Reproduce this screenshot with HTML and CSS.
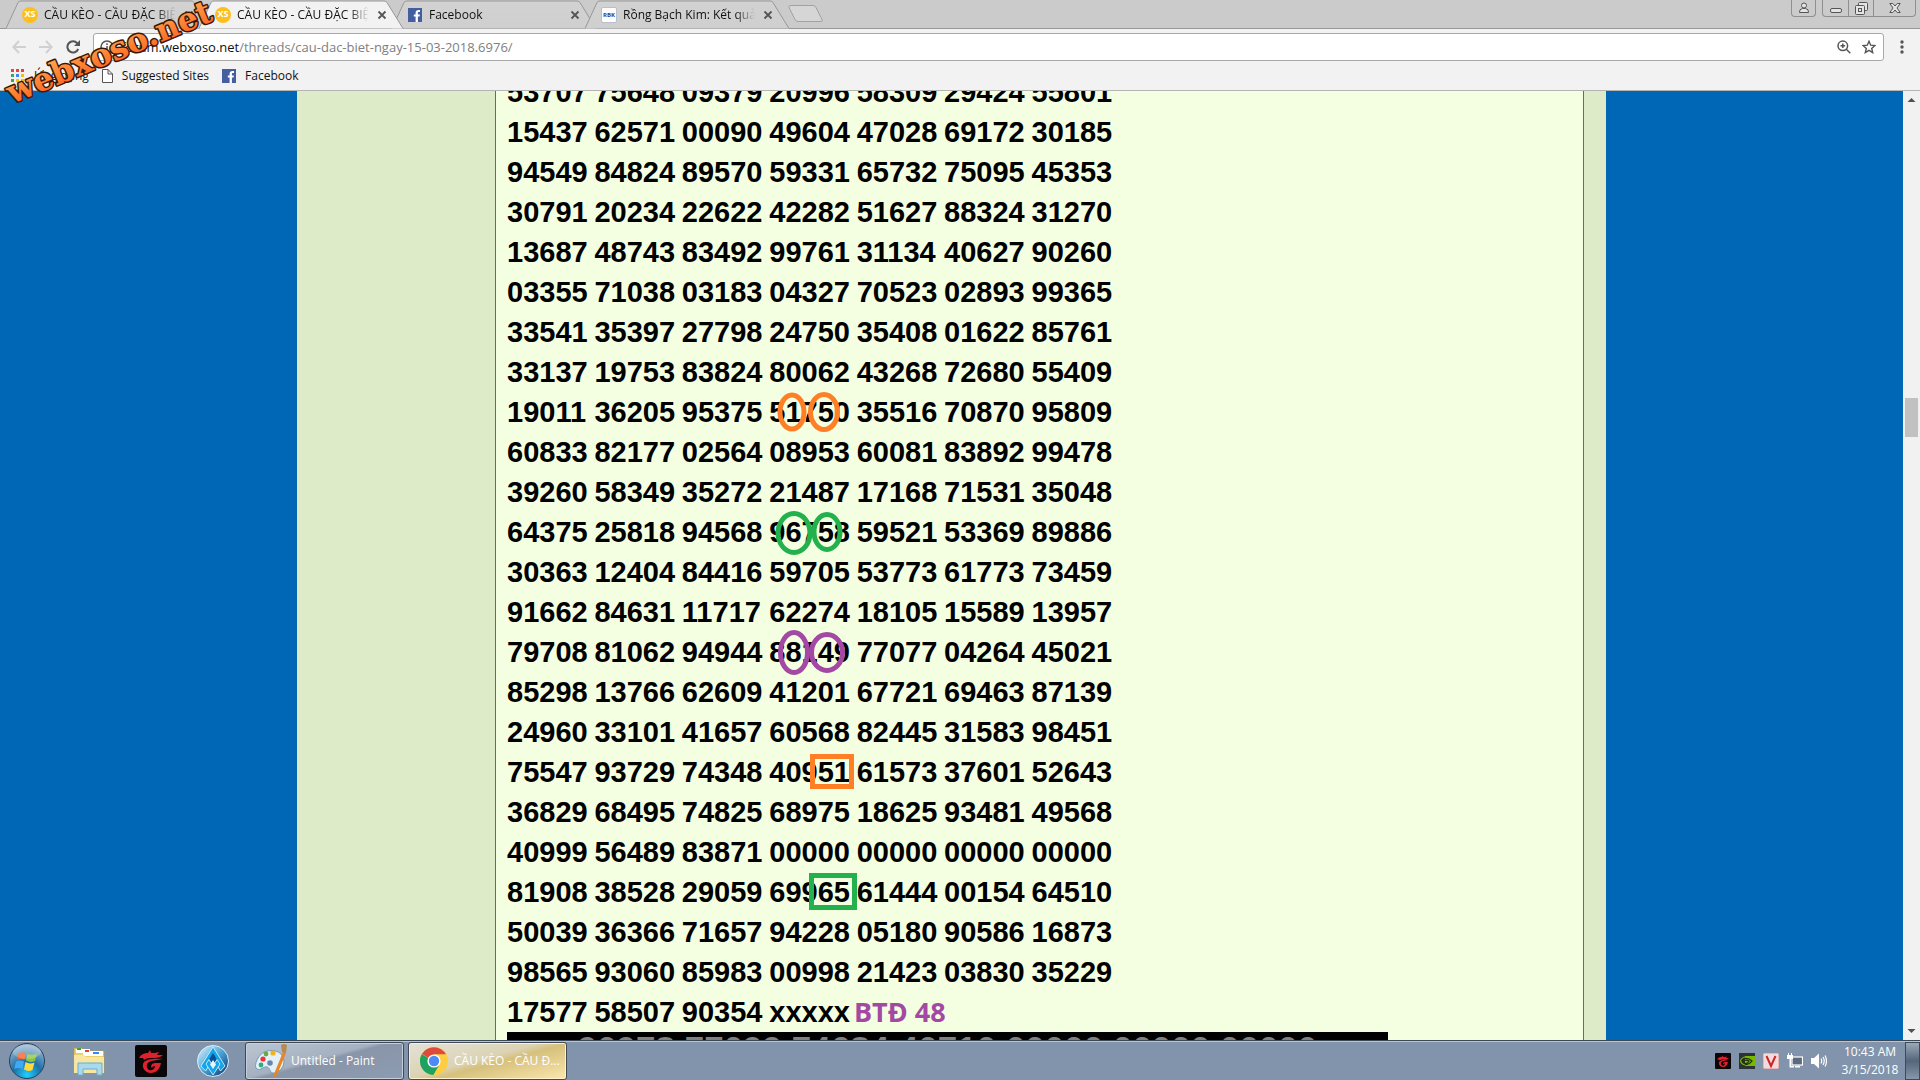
FILE: index.html
```html
<!DOCTYPE html>
<html lang="vi">
<head>
<meta charset="utf-8">
<title>CẦU KÈO - CẦU ĐẶC BIỆT</title>
<link rel="stylesheet" href="styles.css">
</head>
<body>
<svg class="defs" aria-hidden="true">
  <defs>
    <linearGradient id="tabIdle" x1="0" y1="0" x2="0" y2="1"><stop offset="0" stop-color="#d2d2d2"/><stop offset="1" stop-color="#cfcfcf"/></linearGradient>
    <linearGradient id="logoFill" x1="0" y1="0" x2="0" y2="1"><stop offset="0.2" stop-color="#ffa04a"/><stop offset="1" stop-color="#fb5a1c"/></linearGradient>
    <radialGradient id="orb" cx="0.5" cy="0.9" r="0.9"><stop offset="0" stop-color="#1fd0ff"/><stop offset="0.45" stop-color="#1d6fa8"/><stop offset="1" stop-color="#a9c0d4"/></radialGradient>
    <linearGradient id="oval" x1="0" y1="0" x2="1" y2="1"><stop offset="0" stop-color="#e2f6ff"/><stop offset="0.5" stop-color="#4aa3d8"/><stop offset="1" stop-color="#042c66"/></linearGradient>
    <symbol id="tabShape" viewBox="0 0 206 28"><path d="M0 28 12 2Q13 .5 15 .5H185Q187 .5 188 2L204 28" stroke="#979797"/></symbol>
    <symbol id="fb" viewBox="0 0 14 14"><path fill="#435f9f" d="M0 0h14v14H0z"/><path fill="#fff" d="M7.6 14V8.6H5.8V6.4h1.8V4.8C7.600 2.900 8.700 2 10.400 2H12v2h-1c-.9 0-1.100.4-1.100 1.100v1.300h2L11.600 8.600H9.900V14z"/></symbol>
    <symbol id="close" viewBox="0 0 10 10"><path d="M1.500 1.500l7 7M8.500 1.500l-7 7" stroke="#555" stroke-width="1.800"/></symbol>
    <symbol id="garena" viewBox="0 0 32 32"><rect width="32" height="32" rx="2" fill="#0b0708"/><path fill="#e0202c" d="M4 13C6 9 10 8 13 8l2-3 1 3c3 0 5 0 8-1l-2 3h6c-2 2-5 3-9 3-5 0-8 0-10 2l-1-2zM9 17c3-3 11-4 19-3-4 1-10 1-14 3-3 2-3 6 0 8 3 1 6-1 6-4-2 0-3 1-3 2-2-2 0-5 3-5h6c-1 6-5 10-10 10-7 0-10-7-7-11z"/></symbol>
  </defs>
</svg>

<header class="browser">
  <div class="tabstrip">
    <div class="tab"><svg class="shape" fill="url(#tabIdle)"><use href="#tabShape"/></svg><span class="xs">xs</span><span class="name">CẦU KÈO - CẦU ĐẶC BIỆT</span><button class="x" aria-label="Close"><svg><use href="#close"/></svg></button></div>
    <div class="tab active"><svg class="shape" fill="#f2f2f2"><use href="#tabShape"/></svg><span class="xs">xs</span><span class="name">CẦU KÈO - CẦU ĐẶC BIỆT</span><button class="x" aria-label="Close"><svg><use href="#close"/></svg></button></div>
    <div class="tab"><svg class="shape" fill="url(#tabIdle)"><use href="#tabShape"/></svg><svg class="fb"><use href="#fb"/></svg><span class="name">Facebook</span><button class="x" aria-label="Close"><svg><use href="#close"/></svg></button></div>
    <div class="tab"><svg class="shape" fill="url(#tabIdle)"><use href="#tabShape"/></svg><span class="rbk">RBK</span><span class="name">Rồng Bạch Kim: Kết quả xổ</span><button class="x" aria-label="Close"><svg><use href="#close"/></svg></button></div>
    <button class="newtab" aria-label="New tab"><svg width="36" height="18" viewBox="0 0 36 18"><path d="M3 .5h22q2 0 3 2l6 12q1 2-1 2H10q-2 0-3-2L1 2.500Q.5.5 3 .5z" fill="#d6d6d6" stroke="#a2a2a2"/></svg></button>
    <div class="winctl">
      <button class="profile" aria-label="Profile"><svg width="12" height="12" viewBox="0 0 12 12"><circle cx="6" cy="3.500" r="2.500"/><path d="M1.500 10.500Q1 7 4.500 6.500h3Q11 7 10.500 10.500z"/></svg></button>
      <div class="wingroup">
        <button aria-label="Minimize"><svg width="12" height="12" viewBox="0 0 12 12"><rect x=".5" y="6.500" width="11" height="4" rx="1.500"/></svg></button>
        <button aria-label="Restore"><svg width="14" height="14" viewBox="0 0 14 14"><rect x="4.500" y="1.500" width="9" height="8" rx="1"/><rect x="1.500" y="4.500" width="9" height="9" rx="1"/><rect x="4.500" y="7.500" width="3" height="3"/></svg></button>
        <button class="wide" aria-label="Close window"><svg width="12" height="12" viewBox="0 0 12 12"><path d="M.8 1.500h3L6 4l2.200-2.500h3L8 6l3.200 4.500h-3L6 8l-2.200 2.500h-3L4 6z"/></svg></button>
      </div>
    </div>
  </div>

  <div class="toolbar">
    <button aria-label="Back"><svg width="14" height="14" viewBox="0 0 14 14" stroke="#d0d0d0"><path d="M14 7H1.500M7 1 1.300 7 7 13"/></svg></button>
    <button aria-label="Forward"><svg width="14" height="14" viewBox="0 0 14 14" stroke="#d0d0d0"><path d="M0 7h12.500M7 1l5.700 6L7 13"/></svg></button>
    <button aria-label="Reload"><svg width="14" height="14" viewBox="0 0 14 14" stroke="#555"><path d="M12.200 9A5.600 5.600 0 1 1 11.300 3.300"/><path d="M14 0v6H8z" fill="#555" stroke="none"/></svg></button>
    <div class="omnibox">
      <svg width="14" height="14" viewBox="0 0 14 14" fill="none" stroke="#555" stroke-width="1.500"><circle cx="7" cy="7" r="6"/><path d="M7 6v4.500M7 3.300V5"/></svg>
      <div class="url"><b>forum.webxoso.net</b>/threads/cau-dac-biet-ngay-15-03-2018.6976/</div>
      <svg width="14" height="14" viewBox="0 0 14 14" fill="none" stroke="#555" stroke-width="1.500"><circle cx="5.800" cy="5.800" r="4.800"/><path d="M9.300 9.300l4 4M3.500 5.800h4.600M5.800 3.500v4.600"/></svg>
      <svg width="14" height="14" viewBox="0 0 14 14" fill="none" stroke="#555" stroke-width="1.400"><path d="M7 1.300l1.700 3.900 4.200.4-3.200 2.800 1 4.200L7 10.400l-3.700 2.200 1-4.200L1.100 5.600l4.200-.4z"/></svg>
    </div>
    <button class="menu" aria-label="Menu"><svg width="4" height="14" viewBox="0 0 4 14"><circle cx="2" cy="2" r="1.700"/><circle cx="2" cy="7" r="1.700"/><circle cx="2" cy="12" r="1.700"/></svg></button>
  </div>

  <nav class="bookmarks">
    <a href="#"><svg width="14" height="14" viewBox="0 0 14 14"><path fill="#ea4335" d="M0 0h3v3H0zM5 0h3v3H5zM10 0h3v3h-3z"/><path fill="#34a853" d="M0 5h3v3H0zM0 10h3v3H0z"/><path fill="#4285f4" d="M5 5h3v3H5z"/><path fill="#fbbc05" d="M10 5h3v3h-3zM5 10h3v3H5zM10 10h3v3h-3z"/></svg>Ứng dụng</a>
    <a href="#"><svg width="11" height="14" viewBox="0 0 11 14" fill="#fff" stroke="#555"><path d="M.5.5H6L10.500 5v8.500H.5zM6 .5V5h4.500"/></svg>Suggested Sites</a>
    <a href="#"><svg width="14" height="14"><use href="#fb"/></svg>Facebook</a>
  </nav>

  <svg class="watermark" width="230" height="120" viewBox="0 0 230 120" role="img" aria-label="webxoso.net">
    <text x="12" y="104" transform="rotate(-22.500 12 104)">webxoso.net</text>
  </svg>
</header>

<div class="viewport">
  <div class="page">
    <div class="wrap">
      <aside class="userinfo"></aside>
      <main class="post">
        <table class="numbers">
          <tbody>
          <tr><td>53707</td><td>75648</td><td>09379</td><td>20996</td><td>58309</td><td>29424</td><td>55801</td></tr>
          <tr><td>15437</td><td>62571</td><td>00090</td><td>49604</td><td>47028</td><td>69172</td><td>30185</td></tr>
          <tr><td>94549</td><td>84824</td><td>89570</td><td>59331</td><td>65732</td><td>75095</td><td>45353</td></tr>
          <tr><td>30791</td><td>20234</td><td>22622</td><td>42282</td><td>51627</td><td>88324</td><td>31270</td></tr>
          <tr><td>13687</td><td>48743</td><td>83492</td><td>99761</td><td>31134</td><td>40627</td><td>90260</td></tr>
          <tr><td>03355</td><td>71038</td><td>03183</td><td>04327</td><td>70523</td><td>02893</td><td>99365</td></tr>
          <tr><td>33541</td><td>35397</td><td>27798</td><td>24750</td><td>35408</td><td>01622</td><td>85761</td></tr>
          <tr><td>33137</td><td>19753</td><td>83824</td><td>80062</td><td>43268</td><td>72680</td><td>55409</td></tr>
          <tr><td>19011</td><td>36205</td><td>95375</td><td>51750</td><td>35516</td><td>70870</td><td>95809</td></tr>
          <tr><td>60833</td><td>82177</td><td>02564</td><td>08953</td><td>60081</td><td>83892</td><td>99478</td></tr>
          <tr><td>39260</td><td>58349</td><td>35272</td><td>21487</td><td>17168</td><td>71531</td><td>35048</td></tr>
          <tr><td>64375</td><td>25818</td><td>94568</td><td>96758</td><td>59521</td><td>53369</td><td>89886</td></tr>
          <tr><td>30363</td><td>12404</td><td>84416</td><td>59705</td><td>53773</td><td>61773</td><td>73459</td></tr>
          <tr><td>91662</td><td>84631</td><td>11717</td><td>62274</td><td>18105</td><td>15589</td><td>13957</td></tr>
          <tr><td>79708</td><td>81062</td><td>94944</td><td>88149</td><td>77077</td><td>04264</td><td>45021</td></tr>
          <tr><td>85298</td><td>13766</td><td>62609</td><td>41201</td><td>67721</td><td>69463</td><td>87139</td></tr>
          <tr><td>24960</td><td>33101</td><td>41657</td><td>60568</td><td>82445</td><td>31583</td><td>98451</td></tr>
          <tr><td>75547</td><td>93729</td><td>74348</td><td>40951</td><td>61573</td><td>37601</td><td>52643</td></tr>
          <tr><td>36829</td><td>68495</td><td>74825</td><td>68975</td><td>18625</td><td>93481</td><td>49568</td></tr>
          <tr><td>40999</td><td>56489</td><td>83871</td><td>00000</td><td>00000</td><td>00000</td><td>00000</td></tr>
          <tr><td>81908</td><td>38528</td><td>29059</td><td>69965</td><td>61444</td><td>00154</td><td>64510</td></tr>
          <tr><td>50039</td><td>36366</td><td>71657</td><td>94228</td><td>05180</td><td>90586</td><td>16873</td></tr>
          <tr><td>98565</td><td>93060</td><td>85983</td><td>00998</td><td>21423</td><td>03830</td><td>35229</td></tr>
          <tr><td>17577</td><td>58507</td><td>90354</td><td colspan="4">xxxxx <span class="note">BTĐ 48</span></td></tr>
          </tbody>
        </table>
        <div class="attachment">90978 77099 74684 40710 00000 00000 00000</div>
        <svg class="marks" fill="none" stroke-width="5">
          <g transform="translate(-496 -91)">
            <g stroke="#ff7f27"><ellipse cx="792" cy="412" rx="12" ry="17"/><ellipse cx="824" cy="412" rx="13.500" ry="17.500"/><rect x="812.500" y="756.500" width="39" height="30"/></g>
            <g stroke="#22b14c"><ellipse cx="794" cy="533" rx="16" ry="19.500"/><ellipse cx="827" cy="532" rx="13" ry="17.500"/><rect x="811.500" y="875.500" width="43" height="32"/></g>
            <g stroke="#a349a4"><ellipse cx="794" cy="652.500" rx="13.500" ry="20"/><ellipse cx="827" cy="652.500" rx="15.500" ry="18"/></g>
          </g>
        </svg>
      </main>
    </div>
  </div>
  <div class="scrollbar" aria-hidden="true">
    <svg width="17" height="17" viewBox="0 0 17 17"><path fill="#505050" d="M4.500 11 8.500 7l4 4z"/></svg>
    <div class="track"><div class="before"></div><div class="thumb"></div><div class="after"></div></div>
    <svg width="17" height="17" viewBox="0 0 17 17"><path fill="#505050" d="M4.500 6l4 4 4-4z"/></svg>
  </div>
</div>

<footer class="taskbar">
  <div class="pins">
    <button aria-label="Start"><svg width="38" height="38" viewBox="0 0 38 38"><circle cx="19" cy="19" r="17.500" fill="url(#orb)" stroke="#23415f"/><path fill="#f0602a" d="M10 12q4-3 8-1l-1.500 7q-4-2-8 0z"/><path fill="#8cc63f" d="M19.500 11.500q4 2.500 9.500 0l-2 7.500q-5 2-9-.5z"/><path fill="#3fa9f5" d="M8 19.500q4-2 8 0L14.500 27q-4-2-8.500 0z"/><path fill="#ffd83a" d="M17.500 20q4 2.500 9 .5l-2 7.500q-4.500 2-8.500-.5z"/><ellipse cx="19" cy="10" rx="14" ry="7" fill="#fff" opacity=".22"/></svg></button>
    <button aria-label="Explorer"><svg width="32" height="30" viewBox="0 0 32 30"><path fill="#e9cf6e" stroke="#b99a3b" stroke-width=".6" d="M1 2h8l2 3h20v22H1z"/><path fill="#fff" d="M3 3h14v4H3zM10 5h20v5H10z"/><path fill="#3aa53a" d="M4 2h4v2H4z"/><path fill="#d43" d="M12 4h4v2h-4z"/><path fill="#38f" d="M20 6h6v2h-6z"/><path fill="#f7e6a1" d="M1 9h10l2 2h18v16H1z"/><path fill="#a9d9ee" stroke="#6aaccc" d="M5 17h24v12h-5v-6H10v6H5z"/></svg></button>
    <button aria-label="Garena"><svg width="32" height="32"><use href="#garena"/></svg></button>
    <button aria-label="Launcher"><svg width="32" height="32" viewBox="0 0 32 32"><circle cx="16" cy="16" r="15.500" fill="url(#oval)" stroke="#dcecf5"/><path fill="#12a5ea" stroke="#e6f7ff" stroke-width=".8" d="M16 2 28 21l-4.500 5L16 14 8.500 26 4 21z"/><path fill="#0b4f96" d="M16 8l4 6.500-4 6-4-6z"/><path fill="#12a5ea" stroke="#e6f7ff" stroke-width=".8" d="M12 14.500 16 21l4-6.500 3 4.500-7 11-7-11z"/><path fill="#e6f7ff" d="M16 15l3 4.500-3 4.500-3-4.500z"/></svg></button>
  </div>
  <button class="task"><svg width="32" height="34" viewBox="0 0 32 34"><path fill="#e4f0f8" stroke="#6e9cbd" d="M3 14C7 6 20 4 26 10c6 7 2 17-6 19-6 1-4-5-8-6-4-1-6 4-10 2-3-2-1-7 1-11z"/><circle cx="8" cy="15" r="2.600" fill="#e33"/><circle cx="11" cy="10" r="2.400" fill="#6a4"/><circle cx="18" cy="9" r="2.600" fill="#f6b21b"/><circle cx="6" cy="21" r="2.400" fill="#3a7"/><circle cx="15" cy="19" r="2.800" fill="#68a"/><path fill="#e98525" d="M28 8l3 1-9 22-3 2 0-3z"/><path fill="#b98a4f" d="M26 1q3-2 6 0l-1 8-4-1z"/></svg><span>Untitled - Paint</span></button>
  <button class="task current"><svg width="32" height="32" viewBox="0 0 32 32"><circle cx="16" cy="16" r="14" fill="#ffcd41"/><path fill="#dd4b3e" d="M16 16 3.900 9A14 14 0 0 1 28.100 9.500H16z"/><path fill="#1da261" d="M16 16l5.800 4-6.300 10A14 14 0 0 1 3.700 9.200z"/><path fill="#ffcd41" d="M16 9.500h12.400A14 14 0 0 1 15.500 30L21.800 19z"/><circle cx="16" cy="16" r="6.600" fill="#fff"/><circle cx="16" cy="16" r="5.200" fill="#4c8bf5"/></svg><span>CẦU KÈO - CẦU Đ...</span></button>
  <div class="tray">
    <svg width="16" height="16"><use href="#garena"/></svg>
    <svg width="16" height="16" viewBox="0 0 16 16"><rect width="16" height="16" fill="#2c3236"/><path fill="#76b900" d="M6 3h10v10H6z"/><path fill="none" stroke="#76b900" stroke-width="1.200" d="M6 4Q2 5 1.500 8 3 12 7 12"/><path fill="none" stroke="#20300a" stroke-width="1.200" d="M6 5.500q4-.5 7 2.500-3 4-7 3.500M6 5.500Q4 6 3.500 8q1 3 3.500 2.500Q9 10 10 8 8 6.500 6 7.500"/></svg>
    <svg width="16" height="16" viewBox="0 0 16 16"><rect x=".5" y=".5" width="15" height="15" rx="1" fill="#f6d9d9" stroke="#e9b5b5"/><path fill="none" stroke="#c8262c" stroke-width="2" d="M3.500 3 8 13l4.500-10"/></svg>
    <svg width="16" height="16" viewBox="0 0 16 16"><rect x="5" y="4" width="10.500" height="8" fill="#5b6b7d" stroke="#fff" stroke-width="1.200"/><path fill="#fff" d="M8 13h5v1.500H8zM0 2h6v4H4v7h3v1.500H2.500V6H0z"/><path fill="#fff" d="M1 0h1v2H1zM4 0h1v2H4z"/></svg>
    <svg width="16" height="16" viewBox="0 0 16 16"><path fill="#fff" d="M0 5h3l5-4.500v15L3 11H0z"/><path fill="none" stroke="#fff" stroke-width="1.200" d="M10 5.500q1.500 2.500 0 5M12 4q2.500 4 0 8M14 2.500q3 5.500 0 11"/></svg>
  </div>
  <div class="clock"><time>10:43 AM</time><time>3/15/2018</time></div>
  <button class="showdesk" aria-label="Show desktop"></button>
</footer>
</body>
</html>
```
FILE: styles.css
```css
* { box-sizing: border-box; }
html, body { height: 100%; margin: 0; }
body {
  display: flex;
  flex-direction: column;
  overflow: hidden;
  font: 12px/16px "Open Sans", "Noto Sans", sans-serif;
  color: #111;
}
button { margin: 0; padding: 0; border: 0; background: none; font: inherit; color: inherit; }
svg { display: block; flex: none; }
.defs { position: absolute; width: 0; height: 0; }

/* Browser chrome */
.browser { position: relative; flex: none; background: #f2f2f2; border-bottom: 1px solid #b4b4b4; }
.tabstrip { display: flex; height: 29px; padding-left: 6px; background: #cbcbcb; border-bottom: 1px solid #979797; }
.tab { position: relative; display: flex; align-items: center; width: 206px; height: 29px; margin-right: -13px; padding: 0 18px 0 16px; }
.tab.active { z-index: 1; }
.tab > * { position: relative; }
.tab .shape { position: absolute; left: 0; top: 0; width: 206px; height: 29px; }
.tab .name {
  flex: 1;
  margin-left: 6px;
  overflow: hidden;
  line-height: 20px;
  white-space: nowrap;
  -webkit-mask-image: linear-gradient(90deg, #000 85%, transparent);
  mask-image: linear-gradient(90deg, #000 85%, transparent);
}
.tab .x { margin-left: 8px; }
.tab .x svg { width: 10px; height: 10px; }
.tab .fb { width: 14px; height: 14px; margin-right: 1px; }
.xs { width: 16px; height: 16px; border-radius: 50%; background: #fcc01c; color: #fff; font-size: 9px; line-height: 14px; font-weight: 700; text-align: center; text-transform: uppercase; }
.rbk { width: 16px; height: 16px; border: 1px solid #b9c0cc; border-radius: 2px; background: #fff; color: #33417e; font-size: 6px; line-height: 14px; font-weight: 700; text-align: center; }
.newtab { margin: 0 0 0 10px; }
.winctl { display: flex; gap: 6px; height: 17px; margin-left: auto; padding-right: 4px; }
.winctl svg { fill: #e4e4e4; stroke: #555; }
.winctl button { display: flex; align-items: center; justify-content: center; width: 25px; height: 16px; }
.winctl .profile { border: 1px solid #8f8f8f; border-top: 0; border-radius: 0 0 4px 4px; height: 17px; }
.wingroup { display: flex; border: 1px solid #8f8f8f; border-top: 0; border-radius: 0 0 4px 4px; }
.wingroup button + button { border-left: 1px solid #8f8f8f; }
.winctl .wide { width: 42px; }

.toolbar { display: flex; align-items: center; gap: 13px; height: 36px; padding: 0 7px 0 12px; }
.toolbar button svg { fill: none; stroke-width: 2; }
.omnibox { display: flex; align-items: center; flex: 1; gap: 11px; height: 28px; padding: 0 6px; padding-right: 7px; border: 1px solid #a9a9a9; border-radius: 3px; background: #fff; }
.url { flex: 1; margin-left: -4px; font-size: 13px; line-height: 20px; color: #808080; white-space: nowrap; }
.url b { font-weight: 400; color: #111; }
.menu { display: flex; justify-content: center; width: 22px; margin-left: -6px; }
.toolbar .menu svg { fill: #555; }

.bookmarks { display: flex; align-items: center; gap: 13px; height: 25px; padding: 0 11px 3px; }
.bookmarks a { display: flex; align-items: center; gap: 9px; color: inherit; text-decoration: none; }

.watermark { position: absolute; left: 0; top: 0; z-index: 3; pointer-events: none; }
.watermark text { font: 700 32px "DejaVu Serif", serif; fill: url(#logoFill); stroke: #3a1705; stroke-width: 3px; stroke-linejoin: round; paint-order: stroke; }

/* Page */
.viewport { display: flex; flex: 1; min-height: 0; }
.page { flex: 1; min-width: 0; overflow: hidden; background: #0066b6; }
.wrap { display: flex; max-width: 1309px; height: 100%; margin: 0 auto; padding-right: 22px; background: #ddebc8; }
.userinfo { flex: none; width: 198px; }
.post { position: relative; flex: 1; padding-left: 11px; overflow: hidden; background: #f3ffe0; border: solid #6b6b62; border-width: 0 1px; }
.numbers { width: 612px; margin-top: -19px; table-layout: fixed; border-collapse: collapse; }
.numbers td { height: 40px; padding: 0; font: 700 29px/40px "Liberation Sans", Arial, sans-serif; color: #000; white-space: nowrap; }
.note { margin-left: -4px; font: 700 27px/28px "Open Sans", sans-serif; color: #a349a4; }
.attachment { max-width: 881px; background: #000; color: #808080; font: 700 35px/34px "Liberation Sans", Arial, sans-serif; text-align: center; white-space: nowrap; }
.marks { position: absolute; left: 0; top: 0; width: 100%; height: 100%; pointer-events: none; }

.scrollbar { display: flex; flex-direction: column; flex: none; width: 17px; background: #f1f1f1; }
.track { display: flex; flex-direction: column; flex: 1; padding: 0 2px; }
.thumb { height: 39px; background: #c1c1c1; }
.before { flex: 290; }
.after { flex: 586; }

/* Taskbar */
.taskbar { display: flex; flex: none; align-items: center; height: 40px; background: #8294ab; border-top: 1px solid #3c4856; box-shadow: inset 0 1px #b9c5d3; color: #fff; }
.pins { display: flex; align-items: center; gap: 30px; padding: 0 16px 0 8px; }
.pins button:first-child { margin-right: -3px; }
.task { display: flex; align-items: center; gap: 4px; width: 159px; height: 38px; margin-right: 4px; padding: 0 9px; border: 1px solid #3f4a59; border-radius: 3px; background: linear-gradient(165deg, #bcc6d3 0%, #a5b0c0 45%, #8995a8 50%, #8d9cb3 100%); box-shadow: inset 0 0 0 1px #c5cedb; text-align: left; white-space: nowrap; }
.task.current { background: linear-gradient(165deg, #e4e2d8 0%, #dcd3b4 45%, #d6c07c 55%, #fbe7ae 100%); box-shadow: inset 0 0 0 1px #fff3cf; }
.tray { display: flex; align-items: center; gap: 8px; margin: 0 8px 0 auto; }
.clock { display: flex; flex-direction: column; width: 70px; text-align: center; line-height: 18px; }
.showdesk { width: 15px; height: 38px; border: 1px solid #3d4a5a; background: linear-gradient(#9aa8b9, #55657a 50%, #8797aa); }
```
